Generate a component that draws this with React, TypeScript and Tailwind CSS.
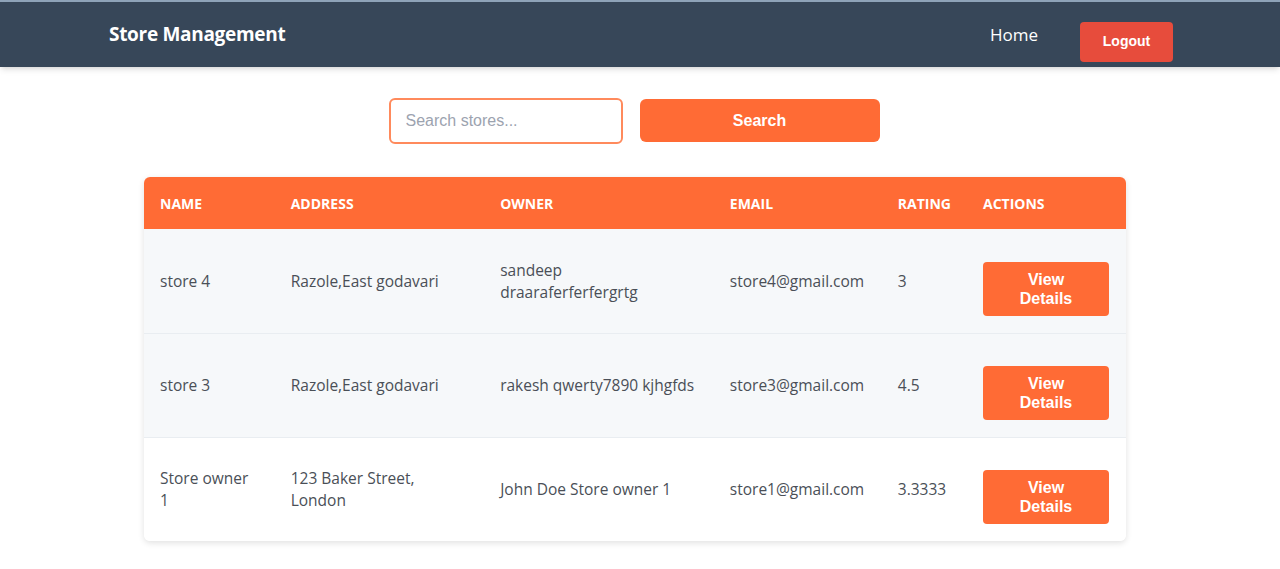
const stores = [
  { name: 'store 4', address: 'Razole,East godavari', owner: 'sandeep draaraferferfergrtg', email: 'store4@gmail.com', rating: '3' },
  { name: 'store 3', address: 'Razole,East godavari', owner: 'rakesh qwerty7890 kjhgfds', email: 'store3@gmail.com', rating: '4.5' },
  { name: 'Store owner 1', address: '123 Baker Street, London', owner: 'John Doe Store owner 1', email: 'store1@gmail.com', rating: '3.3333' },
]

export default function App() {
  return (
    <div className="min-h-screen bg-white font-['Open_Sans',sans-serif]">
      {/* Navbar */}
      <nav className="h-[67px] bg-[#374759] border-t-2 border-[#8ea3b8] shadow-md flex items-center justify-between pl-[109px] pr-[107px]">
        <h1 className="text-[19px] font-bold text-white tracking-[-0.3px]">Store Management</h1>
        <div className="flex items-center gap-[42px]">
          <a className="text-[17px] text-white">Home</a>
          <button className="w-[93px] h-[40px] mt-[14px] rounded bg-[#e74c3c] text-white text-[14px] font-bold font-['Liberation_Sans',sans-serif]">
            Logout
          </button>
        </div>
      </nav>

      {/* Search */}
      <div className="flex justify-center gap-[17px] pt-[31px] pr-[12px]">
        <input
          placeholder="Search stores..."
          className="w-[234px] h-[46px] rounded-md border-2 border-[#ff8a5c] px-[15px] text-[16px] font-['Liberation_Sans',sans-serif] placeholder:text-[#9ca3af] outline-none"
        />
        <button className="w-[240px] h-[43px] mt-[1px] rounded-md bg-[#ff6b35] text-white text-[16px] font-bold font-['Liberation_Sans',sans-serif]">
          Search
        </button>
      </div>

      {/* Table */}
      <div className="ml-[144px] mt-[33px] w-[982px] rounded-md bg-white shadow-[0_2px_6px_rgba(0,0,0,0.12)] overflow-hidden">
        <table className="w-full border-collapse text-left">
          <thead>
            <tr className="h-[52px] bg-[#ff6b35] text-white text-[14px] font-bold uppercase">
              <th className="w-[131px] px-4 font-bold">Name</th>
              <th className="w-[210px] px-4 font-bold">Address</th>
              <th className="w-[230px] px-4 font-bold">Owner</th>
              <th className="w-[168px] px-4 font-bold">Email</th>
              <th className="w-[84px] px-4 font-bold">Rating</th>
              <th className="px-4 font-bold">Actions</th>
            </tr>
          </thead>
          <tbody className="text-[15.5px] leading-[22px] text-[#4a4f57]">
            {stores.map((s, i) => (
              <tr key={i} className={`h-[104px] border-b border-[#e9edf1] last:border-b-0 ${i < 2 ? 'bg-[#f6f8fa]' : 'bg-white'}`}>
                <td className="px-4">{s.name}</td>
                <td className="px-4">{s.address}</td>
                <td className="px-4">{s.owner}</td>
                <td className="px-4">{s.email}</td>
                <td className="px-4">{s.rating}</td>
                <td className="pl-4 pr-[17px] pt-[16px]">
                  <button className="w-[126px] h-[54px] rounded bg-[#ff6b35] text-white text-[16px] leading-[19px] font-bold font-['Liberation_Sans',sans-serif]">
                    View
                    <br />
                    Details
                  </button>
                </td>
              </tr>
            ))}
          </tbody>
        </table>
      </div>
    </div>
  )
}
